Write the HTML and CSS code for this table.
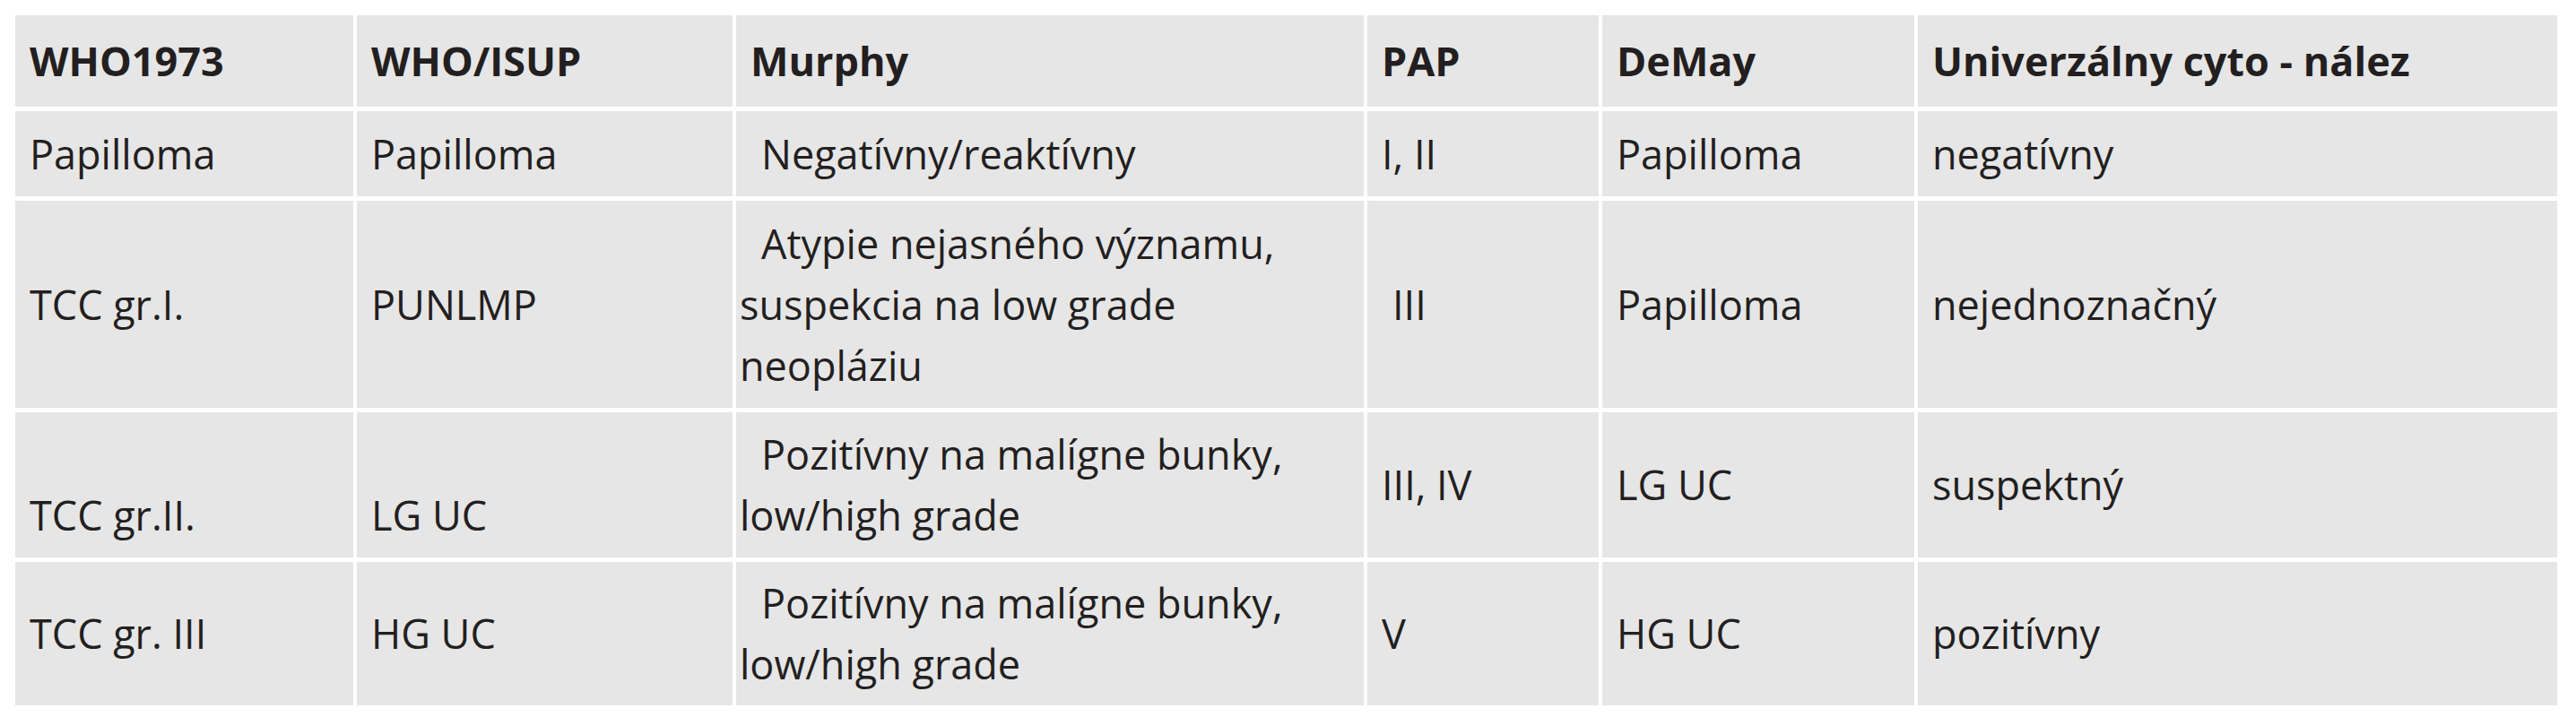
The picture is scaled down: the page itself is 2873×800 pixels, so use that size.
FILE: index.html
```html
<!DOCTYPE html>
<html lang="sk">
<head>
<meta charset="utf-8">
<title>Klasifikácia</title>
<link rel="stylesheet" href="styles.css">
</head>
<body>
<table class="grid">
  <colgroup>
    <col class="c1"><col class="c2"><col class="c3"><col class="c4"><col class="c5"><col class="c6">
  </colgroup>
  <thead>
    <tr class="r-head">
      <th>WHO1973</th><th>WHO/ISUP</th><th>Murphy</th><th>PAP</th><th>DeMay</th><th>Univerzálny cyto - nález</th>
    </tr>
  </thead>
  <tbody>
    <tr class="r1">
      <td>Papilloma</td><td>Papilloma</td><td class="ind">Negatívny/reaktívny</td><td>I, II</td><td>Papilloma</td><td>negatívny</td>
    </tr>
    <tr class="r2">
      <td>TCC gr.I.</td><td>PUNLMP</td><td class="ind">Atypie nejasného významu,<br><span class="noind">suspekcia na low grade</span><br><span class="noind">neopláziu</span></td><td class="ind">III</td><td>Papilloma</td><td>nejednoznačný</td>
    </tr>
    <tr class="r3">
      <td class="low">TCC gr.II.</td><td class="low">LG UC</td><td class="ind">Pozitívny na malígne bunky,<br><span class="noind">low/high grade</span></td><td>III, IV</td><td>LG UC</td><td>suspektný</td>
    </tr>
    <tr class="r4">
      <td>TCC gr. III</td><td>HG UC</td><td class="ind">Pozitívny na malígne bunky,<br><span class="noind">low/high grade</span></td><td>V</td><td>HG UC</td><td>pozitívny</td>
    </tr>
  </tbody>
</table>
</body>
</html>
```

FILE: styles.css
```css
html, body {
  margin: 0;
  padding: 0;
  background: #ffffff;
}

.grid {
  margin: 12px 0 0 13px;
  border-collapse: separate;
  border-spacing: 4px 5px;
  table-layout: fixed;
  font-family: "Open Sans", "Noto Sans", "Liberation Sans", sans-serif;
  font-size: 45px;
  line-height: 68px;
  color: #231f20;
}

.c1 { width: 377px; }
.c2 { width: 419px; }
.c3 { width: 700px; }
.c4 { width: 258px; }
.c5 { width: 348px; }
.c6 { width: 713px; }

.grid th,
.grid td {
  background: #e6e6e6;
  padding: 0 8px 0 16px;
  text-align: left;
  vertical-align: middle;
  box-sizing: border-box;
  white-space: nowrap;
}

.grid th {
  font-weight: 700;
}

.r-head { height: 102px; }
.r1 { height: 95px; }
.r2 { height: 231px; }
.r3 { height: 162px; }
.r4 { height: 160px; }

.grid td.ind {
  text-indent: 12px;
}

.noind {
  margin-left: -12px;
}

.grid td.low {
  padding-top: 68px;
}
```
